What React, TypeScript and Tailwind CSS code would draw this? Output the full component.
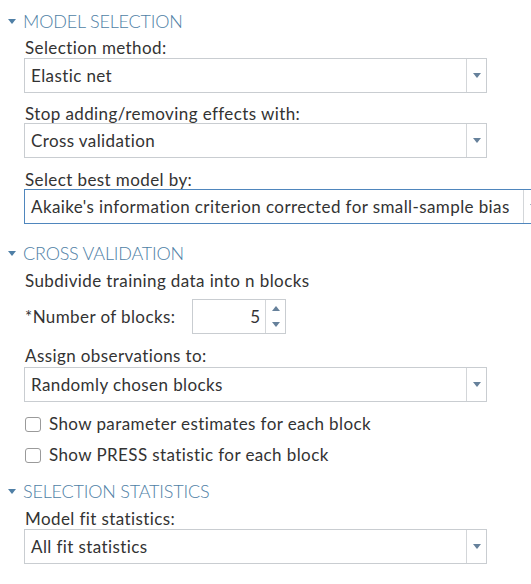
import React from "react";

const font = { fontFamily: "Lato, 'Open Sans', sans-serif" };

function Caret({ className = "" }: { className?: string }) {
  return (
    <svg width="8" height="5" viewBox="0 0 8 5" className={className}>
      <path d="M0 0h8L4 5z" fill="currentColor" />
    </svg>
  );
}

function SectionHeader({ title, className = "" }: { title: string; className?: string }) {
  return (
    <div className={`flex items-center h-[24px] text-[#4f7fa6] ${className}`}>
      <Caret className="ml-[8px] mr-[7px]" />
      <span className="text-[18px] font-light tracking-[-0.2px] leading-[24px]">{title}</span>
    </div>
  );
}

function Label({ text, className = "" }: { text: string; className?: string }) {
  return (
    <div className={`pl-[25px] text-[17px] tracking-[0.4px] leading-[19px] text-[#333] ${className}`}>
      {text}
    </div>
  );
}

function Select({
  value,
  focused,
  wide,
  className = "",
}: {
  value: string;
  focused?: boolean;
  wide?: boolean;
  className?: string;
}) {
  return (
    <div
      className={`ml-[24px] h-[35px] flex border bg-white ${
        focused ? "border-[#4f86bd]" : "border-[#c9cdd1]"
      } ${wide ? "w-[520px] shrink-0" : "w-[463px]"} ${className}`}
    >
      <div className="flex-1 flex items-center pl-[6px] text-[17px] tracking-[0.4px] text-[#333] whitespace-nowrap overflow-hidden">
        {value}
      </div>
      <div className="w-[20px] flex items-center justify-center border-l border-[#d3d6d9] text-[#66819b]">
        <Caret />
      </div>
    </div>
  );
}

function Check({ text, className = "" }: { text: string; className?: string }) {
  return (
    <div className={`flex items-center pl-[25px] h-[20px] ${className}`}>
      <div className="w-[16px] h-[15px] border border-[#9a9a9a] rounded-[3px] bg-white" />
      <span className="ml-[8px] text-[17px] tracking-[0.4px] text-[#333]">{text}</span>
    </div>
  );
}

export default function App() {
  return (
    <div className="w-[531px] h-[584px] bg-white overflow-hidden" style={font}>
      <SectionHeader title="MODEL SELECTION" className="mt-[9px]" />
      <Label text="Selection method:" className="mt-[5px]" />
      <Select value="Elastic net" className="mt-[1px]" />
      <Label text="Stop adding/removing effects with:" className="mt-[11px]" />
      <Select value="Cross validation" />
      <Label text="Select best model by:" className="mt-[12px]" />
      <Select
        value="Akaike's information criterion corrected for small-sample bias"
        focused
        wide
      />

      <SectionHeader title="CROSS VALIDATION" className="mt-[17px]" />
      <Label text="Subdivide training data into n blocks" className="mt-[6px]" />
      <div className="flex items-center mt-[9px] h-[35px]">
        <div className="pl-[25px] text-[17px] tracking-[0.4px] text-[#333] w-[192px]">*Number of blocks:</div>
        <div className="w-[94px] h-[35px] flex border border-[#c9cdd1]">
          <div className="flex-1 flex items-center justify-end pr-[5px] text-[17px] text-[#333]">5</div>
          <div className="w-[20px] flex flex-col items-center justify-center gap-[11px] border-l border-[#d3d6d9] text-[#66819b]">
            <Caret className="rotate-180" />
            <Caret />
          </div>
        </div>
      </div>
      <Label text="Assign observations to:" className="mt-[12px]" />
      <Select value="Randomly chosen blocks" className="mt-[2px]" />
      <Check text="Show parameter estimates for each block" className="mt-[12px]" />
      <Check text="Show PRESS statistic for each block" className="mt-[11px]" />

      <SectionHeader title="SELECTION STATISTICS" className="mt-[14px]" />
      <Label text="Model fit statistics:" className="mt-[6px]" />
      <Select value="All fit statistics" className="mt-[1px]" />
    </div>
  );
}
